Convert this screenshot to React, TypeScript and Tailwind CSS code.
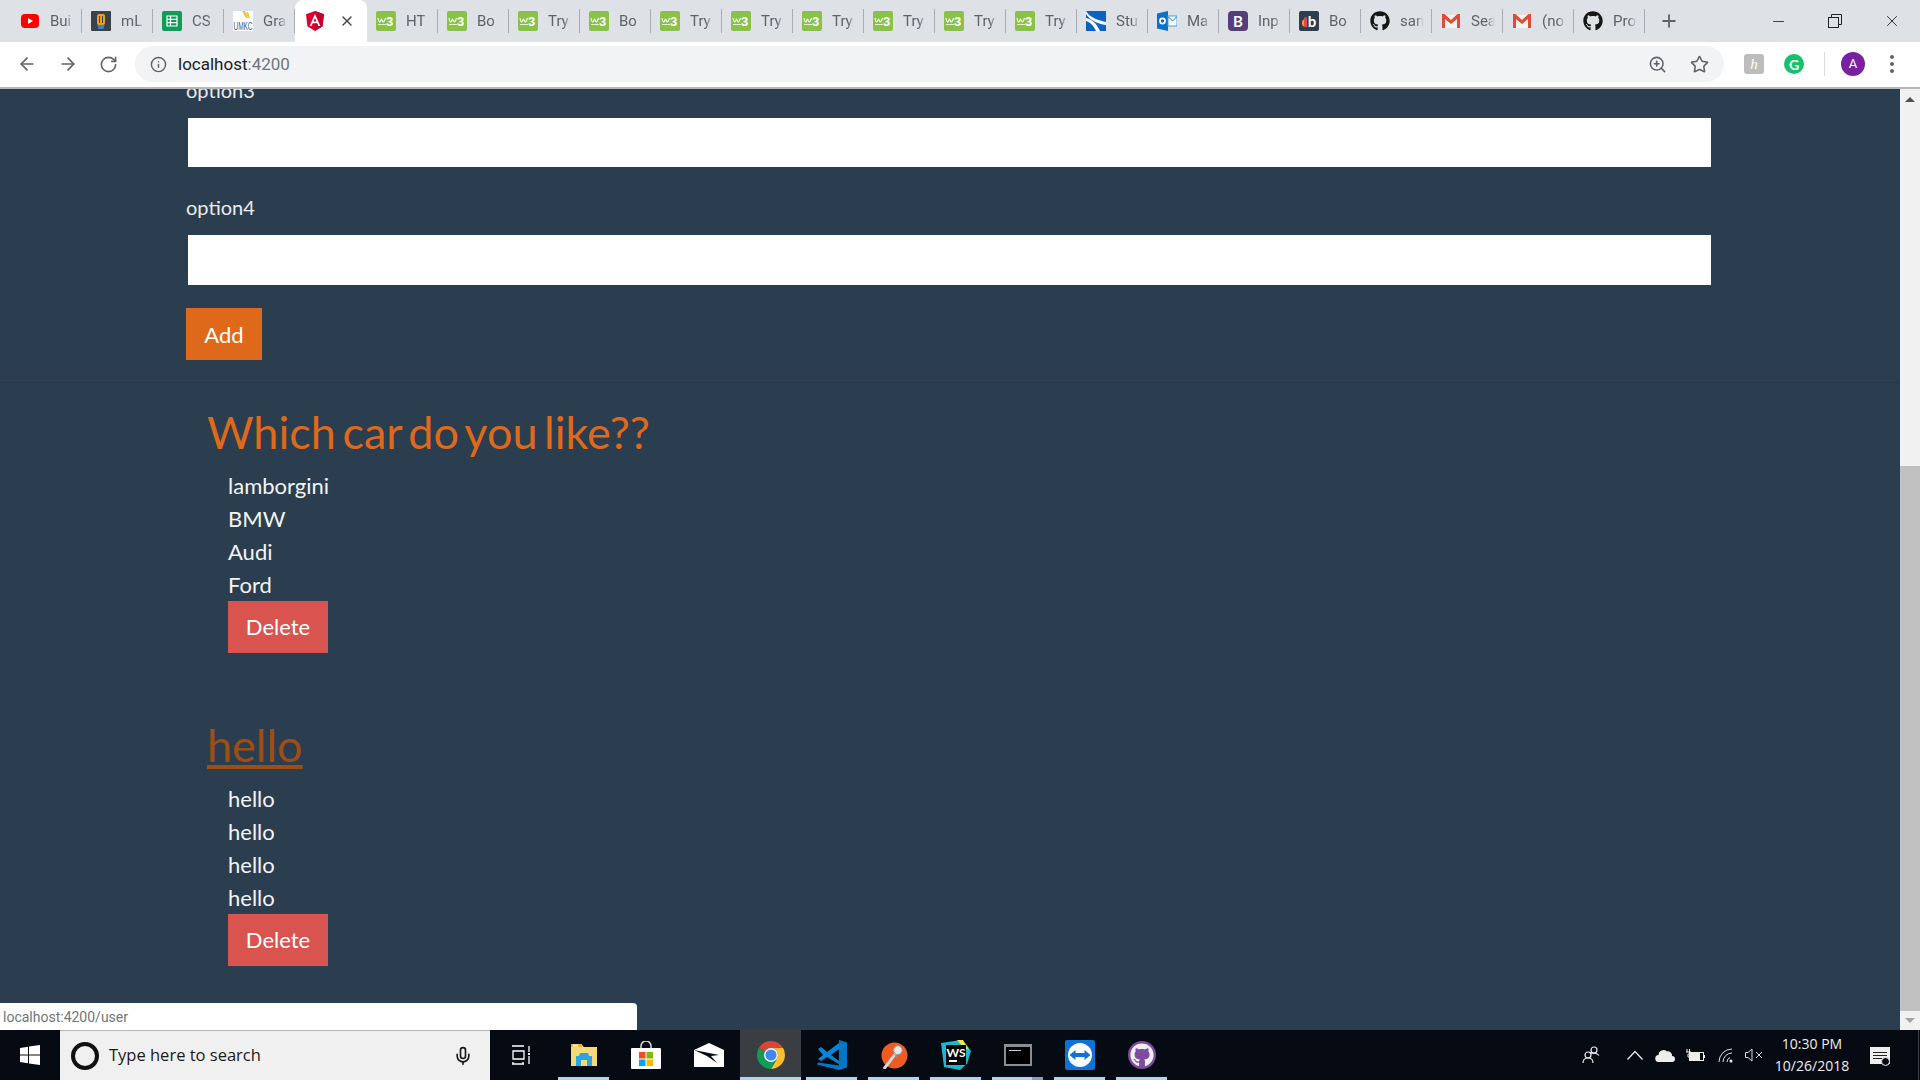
import React from 'react'
import { ArrowLeft, ArrowRight, RotateCw, Info, ZoomIn, Star, Plus, Minus, X, Mic } from 'lucide-react'
import { FaGithub } from 'react-icons/fa'

// favicons for the tab strip
const W3 = () => (
  <svg viewBox="0 0 20 20" className="w-5 h-5">
    <rect width="20" height="20" rx="2" fill="#8ac249" />
    <path d="M2 7c.5 3 1 4 1.800 4S5 8 5.500 8s1 3 1.800 3S9 8.500 9.500 7" fill="none" stroke="#fff" strokeWidth="1.100" />
    <rect x="2" y="13" width="8" height="1" fill="#e4f2d0" />
    <text x="10" y="15" fontFamily="Liberation Sans" fontSize="13" fontWeight="700" fill="#fff">3</text>
  </svg>
)
const Youtube = () => (
  <svg viewBox="0 0 20 20" className="w-5 h-5"><rect x="1" y="3" width="18" height="14" rx="4" fill="#f00" /><path d="M8 7l5 3-5 3z" fill="#fff" /></svg>
)
const Mlab = () => (
  <svg viewBox="0 0 20 20" className="w-5 h-5"><rect width="20" height="20" rx="1" fill="#37424c" /><rect x="6" y="3" width="8" height="11" rx="2" fill="#e9a11f" /><path d="M6.500 14h7l-1 4h-5z" fill="#3d82c4" /><path d="M8.500 5v7M11.500 5v7" stroke="#37424c" strokeWidth="1" /></svg>
)
const Sheets = () => (
  <svg viewBox="0 0 20 20" className="w-5 h-5"><rect width="20" height="20" rx="2" fill="#0f9d58" /><path d="M5 5h10v10H5zM5 8.300h10M5 11.600h10M8.500 5v10" fill="none" stroke="#fff" strokeWidth="1.200" /></svg>
)
const Umkc = () => (
  <svg viewBox="0 0 20 20" className="w-5 h-5">
    <rect width="20" height="20" fill="#fff" />
    <path d="M9 0l3 0 3 7-2 0zM13 2l2-1 2 6-1.500 0z" fill="#f2c230" />
    <text x="0.500" y="19" fontFamily="Liberation Sans" fontSize="11" fill="#1d5fa8" textLength="19" lengthAdjust="spacingAndGlyphs">UMKC</text>
  </svg>
)
const Angular = () => (
  <svg viewBox="0 0 20 20" className="w-5 h-5"><path d="M10 0L1 3.200l1.400 12L10 20l7.600-4.800 1.400-12z" fill="#dd0031" /><path d="M10 0v20l7.600-4.800 1.400-12z" fill="#c3002f" /><path d="M10 3L4.600 15h2l1.100-2.700h4.600l1.100 2.700h2zM8.500 10.600L10 7l1.500 3.600z" fill="#fff" /></svg>
)
const Stu = () => (
  <svg viewBox="0 0 20 20" className="w-5 h-5"><rect width="20" height="20" fill="#0b62c4" /><path d="M0 7c6 1 11 6 14 13h-4C8 15 4 11 0 10zM0 0c3 6 11 9 20 11v3C11 13 3 8 0 3z" fill="#fff" /></svg>
)
const Outlook = () => (
  <svg viewBox="0 0 20 20" className="w-5 h-5"><path d="M0 2.500L11 0v20L0 17.500z" fill="#0a72c6" /><circle cx="5.500" cy="10" r="2.600" fill="none" stroke="#fff" strokeWidth="1.600" /><rect x="11" y="5" width="9" height="10" fill="#fff" stroke="#4a9ad8" /><path d="M11.500 6l4 4 4-4" fill="none" stroke="#0a72c6" /></svg>
)
const Bootstrap = () => (
  <span className="flex w-5 h-5 items-center justify-center rounded-[4px] bg-[#563d7c] text-[15px] font-bold leading-none text-white">B</span>
)
const Bitbucket = () => (
  <span className="relative flex w-5 h-5 items-center justify-center rounded-[2px] bg-[#2c3e50] text-[15px] font-bold leading-none text-white">
    <span className="absolute left-[3px] bottom-[4px] h-[8px] w-[4px] rounded-l-full bg-[#f4a32b]" />
    <span className="absolute left-[5px] bottom-[4px] h-[10px] w-[3px] rounded-t-full bg-[#e8483f]" />
    <span className="relative left-[3px]">b</span>
  </span>
)
const Octo = () => <FaGithub className="w-5 h-5 text-[#161614]" />
const Gmail = () => (
  <svg viewBox="0 0 20 20" className="w-5 h-5"><path d="M2 4h16v13H2z" fill="#f2f2f2" /><path d="M1 3h2.500L10 9l6.500-6H19v14h-3V8l-6 5-6-5v9H1z" fill="#dd4b39" /></svg>
)

const tabs: { icon: React.ReactNode; label: string; active?: boolean }[] = [
  { icon: <Youtube />, label: 'Bui' },
  { icon: <Mlab />, label: 'mL' },
  { icon: <Sheets />, label: 'CS' },
  { icon: <Umkc />, label: 'Gra' },
  { icon: <Angular />, label: '', active: true },
  { icon: <W3 />, label: 'HT' },
  { icon: <W3 />, label: 'Bo' },
  { icon: <W3 />, label: 'Try' },
  { icon: <W3 />, label: 'Bo' },
  { icon: <W3 />, label: 'Try' },
  { icon: <W3 />, label: 'Try' },
  { icon: <W3 />, label: 'Try' },
  { icon: <W3 />, label: 'Try' },
  { icon: <W3 />, label: 'Try' },
  { icon: <W3 />, label: 'Try' },
  { icon: <Stu />, label: 'Stu' },
  { icon: <Outlook />, label: 'Ma' },
  { icon: <Bootstrap />, label: 'Inp' },
  { icon: <Bitbucket />, label: 'Bo' },
  { icon: <Octo />, label: 'san' },
  { icon: <Gmail />, label: 'Sea' },
  { icon: <Gmail />, label: '(no' },
  { icon: <Octo />, label: 'Pro' },
]

const TabStrip = () => (
  <div className="flex h-[42px] shrink-0 items-center bg-[#dee1e6] pl-[11px]">
    {tabs.map((tab, i) =>
      tab.active ? (
        <div key={i} className="flex h-[42px] w-[72px] shrink-0 items-center justify-between rounded-t-[8px] bg-white pl-[10px] pr-[12px]">
          {tab.icon}
          <X size={16} strokeWidth={2.2} className="text-[#45484c]" />
        </div>
      ) : (
        <div key={i} className="flex h-[24px] w-[71px] shrink-0 items-center border-r border-[#a9acb1] pl-[9px]">
          {tab.icon}
          <span className="ml-[10px] w-[28px] whitespace-nowrap font-['Roboto',sans-serif] text-[15px] text-[#5f6368] [mask-image:linear-gradient(to_right,black_55%,transparent_85%)]">
            {tab.label}
          </span>
        </div>
      )
    )}
    <Plus size={20} strokeWidth={2.2} className="ml-[14px] text-[#5f6368]" />
    <div className="flex-1" />
    <div className="flex w-[157px] items-center justify-between pr-[19px] pl-[7px] text-[#222]">
      <Minus size={17} strokeWidth={1.2} />
      <svg viewBox="0 0 14 14" className="w-[14px] h-[14px]" fill="none" stroke="#222"><rect x="0.500" y="3.500" width="10" height="10" /><path d="M3.500 3V0.500h10v10H11" /></svg>
      <X size={18} strokeWidth={1.2} />
    </div>
  </div>
)

const Toolbar = () => (
  <div className="flex h-[47px] shrink-0 items-start border-b-2 border-[#b7b7b7] bg-white pt-[4px] text-[#5f6368]">
    <div className="flex w-[135px] h-[36px] items-center gap-[21px] pl-[17px]">
      <ArrowLeft size={20} />
      <ArrowRight size={20} />
      <RotateCw size={19} />
    </div>
    <div className="flex h-[36px] w-[1589px] items-center rounded-full bg-[#f1f3f4] pl-[15px] pr-[15px]">
      <Info size={17} strokeWidth={2} />
      <span className="ml-[11px] pt-px font-['Roboto',sans-serif] text-[17px] text-[#202124]">
        localhost<span className="text-[#70757a]">:4200</span>
      </span>
      <div className="flex-1" />
      <ZoomIn size={19} className="mr-[23px]" />
      <Star size={19} />
    </div>
    <div className="flex h-[36px] flex-1 items-center pl-[20px]">
      <span className="flex h-[20px] w-[20px] items-center justify-center rounded-[3px] bg-[#bdbdbd] font-['Liberation_Serif',serif] text-[15px] italic text-white">h</span>
      <span className="ml-[20px] flex h-[20px] w-[20px] items-center justify-center rounded-full bg-[#15c26b] text-[14px] font-bold text-white">G</span>
      <span className="ml-[20px] h-[24px] w-px bg-[#dadce0]" />
      <span className="ml-[16px] flex h-[24px] w-[24px] items-center justify-center rounded-full bg-[#7b1fa2] font-['Roboto',sans-serif] text-[13px] text-white">A</span>
      <span className="ml-[25px] flex flex-col gap-[3px]">
        <i className="block h-[4px] w-[4px] rounded-full bg-[#5f6368]" />
        <i className="block h-[4px] w-[4px] rounded-full bg-[#5f6368]" />
        <i className="block h-[4px] w-[4px] rounded-full bg-[#5f6368]" />
      </span>
    </div>
  </div>
)

const OptionField = ({ label, inputClass, className }: { label: string; inputClass: string; className?: string }) => (
  <div className={className}>
    <label className="mb-[13px] block text-[20px] leading-[30px] text-[#ebebeb]">{label}</label>
    <div className={inputClass} />
  </div>
)

const QuestionCard = ({ title, options, link }: { title: string; options: string[]; link?: boolean }) => (
  <div className="pl-[207px]">
    <h2 className={link ? 'text-[45px] leading-[60px] text-[#9f4d12] underline decoration-[4px] underline-offset-[3px] [text-decoration-skip-ink:none]' : 'text-[45px] leading-[60px] text-[#df691a] [word-spacing:-5px]'}>
      {title}
    </h2>
    <ul className="ml-[21px] mt-[7px] text-[22px] leading-[33px] text-[#f4f4f4]">
      {options.map((o, i) => (
        <li key={i}>{o}</li>
      ))}
    </ul>
    <button className="ml-[21px] block h-[52px] w-[100px] bg-[#d9534f] pb-[2px] text-[22px] text-white">Delete</button>
  </div>
)

const Scrollbar = () => (
  <div className="flex w-[20px] shrink-0 flex-col items-center bg-[#f1f1f1]">
    <div className="flex h-[20px] items-center justify-center">
      <span className="h-0 w-0 border-x-[5px] border-b-[5px] border-x-transparent border-b-[#505050]" />
    </div>
    <div className="mt-[357px] h-[545px] w-full bg-[#c1c1c1]" />
    <div className="flex h-[19px] items-center justify-center">
      <span className="h-0 w-0 border-x-[5px] border-t-[5px] border-x-transparent border-t-[#a3a3a3]" />
    </div>
  </div>
)

const TaskIcon = ({ children, running, active, className }: { children: React.ReactNode; running?: boolean; active?: boolean; className: string }) => (
  <div className={className}>
    {children}
    {running && <span className={active ? 'absolute bottom-0 left-0 h-[3px] w-full bg-[#a5d8f8]' : 'absolute bottom-0 left-[5px] h-[3px] w-[51px] bg-[#a5d8f8]'} />}
  </div>
)

const cell = 'relative flex h-full w-[62px] shrink-0 items-center justify-center'

const Taskbar = () => (
  <div className="flex h-[50px] shrink-0 items-center bg-[#060b13] text-white">
    <div className="flex h-full w-[60px] items-center justify-center">
      <svg viewBox="0 0 20 20" className="w-5 h-5" fill="#fff"><path d="M0 3l8-1.200V9.500H0zM9 1.600L20 0v9.500H9zM0 10.500h8v7.700L0 17zM9 10.500h11V20L9 18.400z" /></svg>
    </div>
    <div className="flex h-full w-[430px] items-center border-t border-[#b5b5b5] bg-[#f0f0f0] pl-[11px] pr-[17px] text-[#1a1a1a]">
      <span className="h-[28px] w-[28px] rounded-full border-[4px] border-[#111]" />
      <span className="ml-[10px] font-['Open_Sans',sans-serif] text-[16.500px]">Type here to search</span>
      <div className="flex-1" />
      <Mic size={20} />
    </div>
    <div className="flex h-full w-[63px] items-center justify-center pr-[3px]">
      <svg viewBox="0 0 20 20" className="w-5 h-5" fill="none" stroke="#fff" strokeWidth="1.300"><path d="M2 1h12M3 6h11v8H3zM2 19h12M3 19v-2M13 19v-2M19 1v6M19 11v8" /><path d="M18 9h2" strokeWidth="2" /></svg>
    </div>
    <TaskIcon running className={cell}>
      <svg viewBox="0 0 28 24" className="w-[28px] h-[24px]"><path d="M1 1h10l3 3h13v19H1z" fill="#f6d976" /><rect x="1" y="1" width="11" height="3" fill="#e8b33f" /><rect x="3" y="1.500" width="5" height="2" fill="#fff6d0" /><path d="M6 13h3l1-3h8l1 3h3v10h-5v-6h-6v6H6z" fill="#2aa6e4" /></svg>
    </TaskIcon>
    <TaskIcon className={cell}>
      <svg viewBox="0 0 30 28" className="w-[30px] h-[28px]"><path d="M10 8V5a5 5 0 0 1 10 0v3" fill="none" stroke="#ddd" strokeWidth="1.500" /><rect y="7" width="30" height="21" rx="1" fill="#fff" /><rect x="8" y="11" width="6.500" height="6.500" fill="#f25022" /><rect x="15.500" y="11" width="6.500" height="6.500" fill="#7fba00" /><rect x="8" y="18.500" width="6.500" height="6.500" fill="#00a4ef" /><rect x="15.500" y="18.500" width="6.500" height="6.500" fill="#ffb900" /></svg>
    </TaskIcon>
    <TaskIcon className="relative flex h-full w-[63px] shrink-0 items-center justify-center">
      <svg viewBox="0 0 30 24" className="w-[30px] h-[24px]"><path d="M15 0l15 7v17H0V7z" fill="#fff" /><path d="M0 7l25 5-8 1 6 7-10-7z" fill="#060b13" /></svg>
    </TaskIcon>
    <TaskIcon running active className="relative flex h-full w-[61px] shrink-0 items-center justify-center bg-[#3a3e43]">
      <svg viewBox="4 4 40 40" className="w-7 h-7">
        <path d="M24 4a20 20 0 0 1 17.300 10H24a10 10 0 0 0-8.700 5L6.700 14A20 20 0 0 1 24 4z" fill="#db4437" />
        <path d="M41.300 14A20 20 0 0 1 24 44l8.700-15A10 10 0 0 0 24 14z" fill="#fbc02d" />
        <path d="M6.700 14l8.600 5a10 10 0 0 0 17.400 10L24 44A20 20 0 0 1 6.700 14z" fill="#0f9d58" />
        <circle cx="24" cy="24" r="10" fill="#fff" />
        <circle cx="24" cy="24" r="8" fill="#4285f4" />
      </svg>
    </TaskIcon>
    <TaskIcon running className={cell}>
      <svg viewBox="0 0 30 30" className="h-[30px] w-[30px]"><path d="M22 0l8 2.500v25L22 30 0 24.500l1-2 21 3V0z" fill="#0078c8" /><path d="M1 9l3-2 6 5 12-9v6l-8 6 8 6v3L10 17l-6 4-3-2 5-4z" fill="#0a84d8" /></svg>
    </TaskIcon>
    <TaskIcon running className={cell}>
      <svg viewBox="0 0 28 28" className="h-[27px] w-[27px]"><circle cx="14" cy="14" r="13.500" fill="#ef5b25" /><path d="M3 28L16 11" stroke="#d8d8d8" strokeWidth="3" /><circle cx="17.500" cy="8.500" r="4.500" fill="#e8e8e8" stroke="#999" /><path d="M13 12l4 4" stroke="#999" /></svg>
    </TaskIcon>
    <TaskIcon running className={cell}>
      <span className="relative flex h-[30px] w-[30px] items-center justify-center">
        <svg viewBox="0 0 30 30" className="absolute inset-0 h-[30px] w-[30px]"><path d="M0 3l20-3 5 4 5 7-4 13-7 6-16-3z" fill="#1fb7cf" /><path d="M16 0h6l6 10-6-3z" fill="#f5e34a" /><rect x="5" y="5" width="20" height="20" fill="#000" /><rect x="8" y="20" width="8" height="2" fill="#fff" /></svg>
        <span className="relative -mt-[5px] text-[12px] font-bold leading-none text-white">WS</span>
      </span>
    </TaskIcon>
    <TaskIcon running className={cell}>
      <span className="flex h-[22px] w-[28px] items-start border-2 border-[#8a8f96] border-t-[3px] bg-black">
        <span className="mt-[3px] ml-[3px] h-[1px] w-[12px] bg-[#ccc]" />
      </span>
      <span className="absolute bottom-0 right-[6px] h-[3px] w-[11px] bg-[#7fa3bd] z-10" />
    </TaskIcon>
    <TaskIcon running className={cell}>
      <svg viewBox="0 0 30 30" className="h-[30px] w-[30px]"><rect width="30" height="30" rx="2" fill="#0e72d6" /><circle cx="15" cy="15" r="12" fill="#fff" /><path d="M4.500 15l6-5v3h9v-3l6 5-6 5v-3h-9v3z" fill="#0e72d6" /></svg>
    </TaskIcon>
    <TaskIcon running className={cell}>
      <span className="flex h-[28px] w-[28px] items-center justify-center rounded-full bg-[#7e4b9e] text-white">
        <FaGithub className="h-[24px] w-[24px] text-[#eee]" />
      </span>
    </TaskIcon>
    <div className="flex-1" />
    <div className="flex h-full items-center text-[#eee]">
      <svg viewBox="0 0 18 20" className="w-[18px] h-[20px]" fill="none" stroke="#eee" strokeWidth="1.200"><circle cx="12" cy="5" r="3" /><circle cx="6" cy="10" r="3" /><path d="M8 7.500c2 2 6-1 9 3M1 18c0-4 2-5 5-5s5 1 5 5" /></svg>
      <svg viewBox="0 0 16 10" className="ml-[27px] w-4 h-[10px]" fill="none" stroke="#eee" strokeWidth="1.200"><path d="M0.500 9.500L8 1.500l7.500 8" /></svg>
      <svg viewBox="0 0 20 13" className="ml-[12px] w-5 h-[13px]" fill="#eee"><path d="M4 13a3.500 3.500 0 0 1-.5-7A5 5 0 0 1 12 2.500 4 4 0 0 1 17 7a3 3 0 0 1 0 6z" /></svg>
      <svg viewBox="0 0 19 13" className="ml-[11px] w-[19px] h-[13px]" fill="none" stroke="#eee"><path d="M1 0v3M3.500 0v3M0 3h5v2H2v3h2" /><rect x="3.500" y="3.500" width="14" height="8" /><rect x="3.500" y="3.500" width="10" height="8" fill="#eee" /><path d="M18.500 6v3" /></svg>
      <svg viewBox="0 0 15 15" className="ml-[13px] w-[15px] h-[15px]" fill="none" stroke="#ddd" strokeWidth="1"><path d="M1 14A13 13 0 0 1 14 1M5 14a9 9 0 0 1 9-9M9 14a5 5 0 0 1 3-4.500" /><circle cx="13" cy="13" r="1.500" fill="#eee" stroke="none" /></svg>
      <svg viewBox="0 0 18 14" className="ml-[12px] w-[18px] h-[14px]" fill="none" stroke="#ddd" strokeWidth="1"><path d="M0.500 4.500h2.500L7 1v12L3 9.500H0.500zM11 4l6 6M17 4l-6 6" /></svg>
      <div className="ml-[6px] w-[86px] text-center font-['Open_Sans',sans-serif] text-[14px] leading-[22px]">
        <div>10:30 PM</div>
        <div>10/26/2018</div>
      </div>
      <div className="relative ml-[15px] flex h-[17px] w-[20px] flex-col justify-center gap-[2px] bg-[#eee] px-[3px]">
        <i className="block h-px bg-[#222]" />
        <i className="block h-px bg-[#222]" />
        <i className="block h-px w-[9px] bg-[#222]" />
        <span className="absolute -bottom-[2px] right-0 h-[9px] w-[9px] rounded-full border border-[#eee] bg-[#060b13]" />
      </div>
      <span className="ml-[28px] mr-px h-full w-px bg-[#3c4046]" />
    </div>
  </div>
)

export default function App() {
  return (
    <div className="flex h-screen w-[1920px] flex-col overflow-hidden font-['Lato',sans-serif]">
      <TabStrip />
      <Toolbar />
      <main className="relative flex min-h-0 flex-1">
        <div className="min-w-0 flex-1 overflow-hidden bg-[#2b3e50]">
          <div className="-mt-[14px] pl-[186px]">
            <OptionField label="option3" inputClass="ml-[2px] h-[49px] w-[1523px] bg-white" />
            <OptionField label="option4" inputClass="ml-[2px] h-[50px] w-[1523px] bg-white" className="mt-[25px]" />
            <button className="mt-[23px] block h-[52px] w-[76px] bg-[#df691a] text-[22px] text-white">Add</button>
          </div>
          <hr className="mt-[22px] border-[#263848]" />
          <div className="mt-[19px]">
            <QuestionCard title="Which car do you like??" options={['lamborgini', 'BMW', 'Audi', 'Ford']} />
          </div>
          <div className="mt-[62px]">
            <QuestionCard title="hello" options={['hello', 'hello', 'hello', 'hello']} link />
          </div>
        </div>
        <Scrollbar />
        {/* link preview bubble */}
        <div className="absolute bottom-0 left-0 flex h-[27px] w-[637px] items-center rounded-tr-[4px] bg-white pl-[3px] pt-px font-['Roboto',sans-serif] text-[14px] text-[#70757a]">
          localhost:4200/user
        </div>
      </main>
      <Taskbar />
    </div>
  )
}
